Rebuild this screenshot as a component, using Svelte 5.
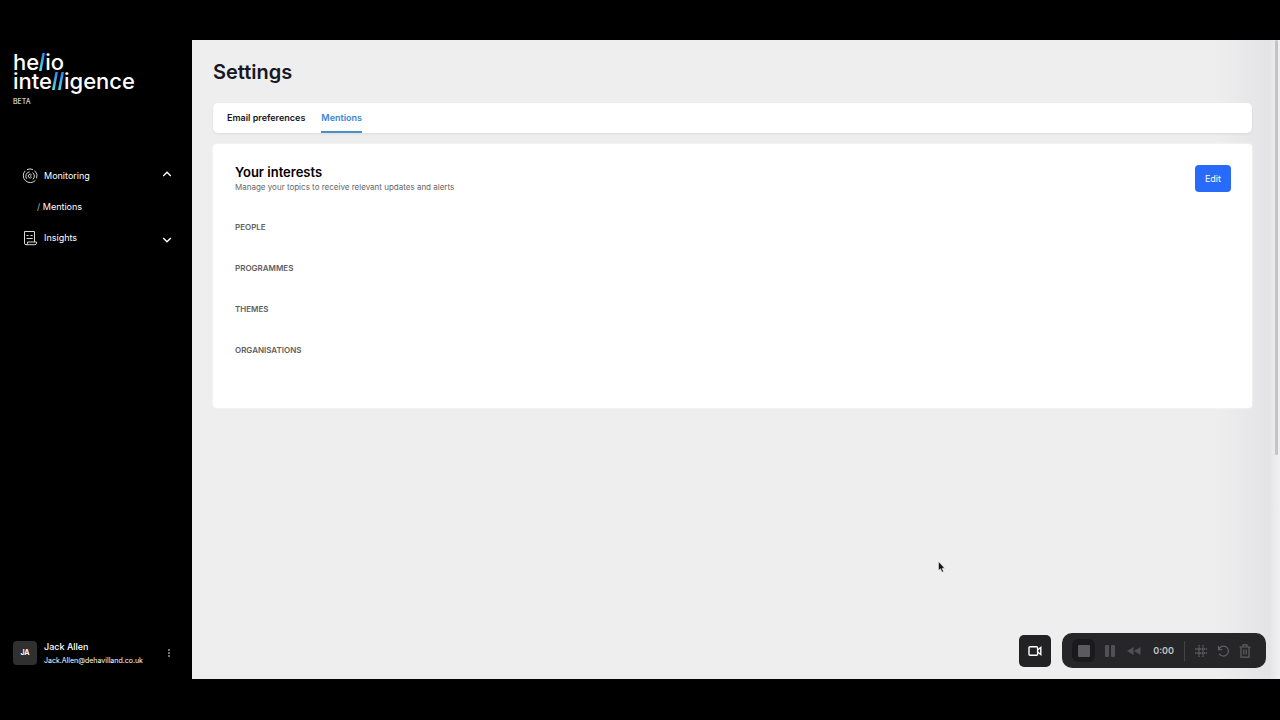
<script>
  let activeTab = $state('Mentions');

  const tabs = ['Email preferences', 'Mentions'];
  const interests = ['People', 'Programmes', 'Themes', 'Organisations'];
</script>

{#snippet slash()}
  <svg class="slash" viewBox="0 0 6 18" aria-hidden="true">
    <defs>
      <linearGradient id="slash-fill" x1="0" y1="0" x2="0" y2="1">
        <stop offset="0" stop-color="#2f80ea" />
        <stop offset="1" stop-color="#52e0f0" />
      </linearGradient>
    </defs>
    <path d="M3.4 0H6L2.6 18H0z" fill="url(#slash-fill)" />
  </svg>
{/snippet}

<div class="app">
  <aside class="sidebar">
    <a class="brand" href="#home" aria-label="helio intelligence">
      <span>he{@render slash()}io</span>
      <span>inte{@render slash()}{@render slash()}igence</span>
      <small>BETA</small>
    </a>

    <nav>
      <button class="nav-item">
        <svg viewBox="0 0 16 16" width="16" height="16" fill="none" stroke="#d8d8d8">
          <path d="M3.2 2.8A7 7 0 1 0 13.4 12.4M5 1.6A7 7 0 0 1 11 1.6M12.6 2.6A7 7 0 0 1 14.6 10.4" />
          <path d="M7.6 3.8a4.3 4.3 0 0 0-2.8 7M10.6 4.6a4.3 4.3 0 0 1 .2 6.8" />
          <path d="M9.6 6.8A1.9 1.9 0 1 0 9.6 9.3M8 8h1.4" />
        </svg>
        <span>Monitoring</span>
        <svg class="chevron" viewBox="0 0 10 10" width="10" height="10" fill="none" stroke="currentColor">
          <path d="M1.2 5L5 1.2 8.8 5" />
        </svg>
      </button>
      <a class="nav-sub" href="#mentions"><i>/</i> Mentions</a>
      <button class="nav-item">
        <svg viewBox="0 0 16 16" width="16" height="16" fill="none" stroke="#d8d8d8">
          <path d="M2.5 13V1.5h10V12M5.5 12h9v1.2a1.6 1.6 0 0 1-1.6 1.5H4A1.6 1.6 0 0 1 2.5 13M5.5 12v1.2A1.5 1.5 0 0 1 4 14.7" />
          <path d="M4.5 5.5h2M8.5 5.5h2.2M4.5 8.5h6.2" />
        </svg>
        <span>Insights</span>
        <svg class="chevron" viewBox="0 0 10 10" width="10" height="10" fill="none" stroke="currentColor">
          <path d="M1.2 5L5 8.8 8.8 5" />
        </svg>
      </button>
    </nav>

    <div class="user">
      <div class="avatar">JA</div>
      <div class="user-text">
        <strong>Jack Allen</strong>
        <span>Jack.Allen@dehavilland.co.uk</span>
      </div>
      <button class="more" aria-label="Account menu">
        <svg viewBox="0 0 2 8" width="2" height="8" fill="currentColor">
          <circle cx="1" cy="1" r=".8" /><circle cx="1" cy="4" r=".8" /><circle cx="1" cy="7" r=".8" />
        </svg>
      </button>
    </div>
  </aside>

  <main>
    <h1>Settings</h1>

    <div class="tabs" role="tablist">
      {#each tabs as tab}
        <button role="tab" aria-selected={activeTab === tab} class:active={activeTab === tab} onclick={() => (activeTab = tab)}>
          {tab}
        </button>
      {/each}
    </div>

    <section class="card">
      <header>
        <div>
          <h2>Your interests</h2>
          <p>Manage your topics to receive relevant updates and alerts</p>
        </div>
        <button class="edit">Edit</button>
      </header>
      {#each interests as interest}
        <h3>{interest}</h3>
      {/each}
    </section>

    <div class="scroll-thumb"></div>

    <svg class="cursor" viewBox="0 0 8 12" width="8" height="12">
      <path d="M.5.5v9l2-1.8 1.5 3.6 1.5-.7L4.1 7.2h2.6z" fill="#111" stroke="#fff" stroke-width=".5" />
    </svg>

    <div class="recorder">
      <button class="camera" aria-label="Camera">
        <svg viewBox="0 0 14 12" width="14" height="12" fill="none" stroke="#fff" stroke-width="1.4">
          <rect x="1" y="1.7" width="8.6" height="8.6" rx="1" />
          <path d="M9.6 5l3.2-2.6v7.2L9.6 7" />
        </svg>
      </button>
      <div class="controls">
        <button class="stop" aria-label="Stop">
          <svg viewBox="0 0 12 12" width="12" height="12"><rect width="12" height="12" rx="1" fill="#5b5b5f" /></svg>
        </button>
        <button aria-label="Pause">
          <svg viewBox="0 0 10 12" width="10" height="12" fill="#515155"><rect width="4" height="12" rx="1" /><rect x="6" width="4" height="12" rx="1" /></svg>
        </button>
        <button class="rewind" aria-label="Rewind">
          <svg viewBox="0 0 14 8" width="14" height="8" fill="#515155"><path d="M0 4L6.5 0v8zM7 4l6.5-4v8z" /></svg>
        </button>
        <time>0:00</time>
        <span class="divider"></span>
        <button aria-label="Grid">
          <svg viewBox="0 0 12 12" width="12" height="12" fill="none" stroke="#5f5f63" stroke-width="1.3" stroke-dasharray="1.6 .6">
            <path d="M4 0v12M8 0v12M0 4h12M0 8h12" />
          </svg>
        </button>
        <button aria-label="Restart">
          <svg viewBox="0 0 12 12" width="12" height="12" fill="none" stroke="#5f5f63" stroke-width="1.2">
            <path d="M1.5 1v3.6h3.6M1.7 4.4a5 5 0 1 1 .4 4.2" />
          </svg>
        </button>
        <button aria-label="Delete">
          <svg viewBox="0 0 12 14" width="12" height="14" fill="none" stroke="#5f5f63" stroke-width="1.2">
            <path d="M.5 3h11M4 3V.8h4V3M2 3v10.2h8V3M4.8 5.5v5M7.2 5.5v5" />
          </svg>
        </button>
      </div>
    </div>
  </main>
</div>

<style>
  :global(body) {
    background: #000;
  }

  .app {
    display: flex;
    box-sizing: border-box;
    min-height: 100vh;
    padding: 40px 0 41px;
    background: #000;
    color: #fff;
    font-family: Inter, "Liberation Sans", sans-serif;
  }

  button {
    border: 0;
    padding: 0;
    background: none;
    color: inherit;
    font: inherit;
    cursor: pointer;
  }

  svg {
    flex-shrink: 0;
  }

  h1,
  h2,
  h3,
  p {
    margin: 0;
  }

  .sidebar {
    display: flex;
    flex-direction: column;
    box-sizing: border-box;
    flex: 0 0 192px;
    padding: 13px 20px 12px 13px;
  }

  .brand {
    display: flex;
    flex-direction: column;
    color: #fff;
    text-decoration: none;
    font-size: 22px;
    font-weight: 500;
    line-height: 19px;
  }

  .brand small {
    margin-top: 6px;
    font-size: 7px;
    font-weight: 400;
    line-height: 10px;
  }

  .slash {
    width: 6px;
    height: 18px;
    vertical-align: -1px;
  }

  nav {
    display: flex;
    flex-direction: column;
    gap: 15px;
    margin-top: 61px;
    padding-left: 9px;
    font-size: 9px;
    line-height: 16px;
  }

  .nav-item {
    display: flex;
    align-items: center;
    gap: 6px;
    text-align: left;
  }

  .chevron {
    margin-left: auto;
    stroke-width: 1.4;
  }

  .nav-sub {
    padding-left: 15px;
    color: #fff;
    text-decoration: none;
  }

  .nav-sub i {
    color: #7cc8c4;
    font-style: normal;
  }

  .user {
    display: flex;
    align-items: center;
    gap: 7px;
    margin-top: auto;
  }

  .avatar {
    width: 24px;
    border-radius: 4px;
    background: #303030;
    font-size: 7px;
    font-weight: 700;
    line-height: 24px;
    text-align: center;
  }

  .user-text {
    display: flex;
    flex-direction: column;
    font-size: 7px;
    line-height: 12px;
  }

  .user-text strong {
    font-size: 9px;
    font-weight: 500;
    line-height: 16px;
  }

  .more {
    display: flex;
    margin-left: auto;
    padding-right: 2px;
  }

  main {
    position: relative;
    flex: 1;
    min-width: 0;
    padding: 20px 28px 0 21px;
    background: linear-gradient(90deg, #eeeeee 94%, #e4e4e7 99%, #f1f1f4);
    color: #000;
  }

  h1 {
    color: #171725;
    font-size: 20px;
    font-weight: 600;
    line-height: 24px;
  }

  .tabs {
    display: flex;
    gap: 16px;
    margin-top: 19px;
    padding: 0 14px;
    border-radius: 5px;
    background: #fff;
    box-shadow: 0 1px 3px rgba(0, 0, 0, 0.08);
  }

  .tabs button {
    border-bottom: 2px solid transparent;
    padding: 7px 0 5px;
    color: #171725;
    font-size: 9px;
    font-weight: 600;
    line-height: 16px;
  }

  .tabs button.active {
    border-color: #4b8fc7;
    color: #3887d6;
  }

  .card {
    margin-top: 11px;
    padding: 20px 21px 52px 22px;
    border-radius: 4px;
    background: #fff;
    box-shadow: 0 0 3px rgba(255, 255, 255, 0.8);
  }

  .card header {
    display: flex;
    justify-content: space-between;
    align-items: flex-start;
    margin-bottom: 28px;
  }

  h2 {
    font-size: 13px;
    font-weight: 600;
    line-height: 17px;
  }

  p {
    color: #666;
    font-size: 8px;
    line-height: 12px;
  }

  .edit {
    margin-top: 1px;
    padding: 0 10px;
    border-radius: 4px;
    background: #286afa;
    color: #fff;
    font-size: 9px;
    line-height: 27px;
  }

  h3 {
    color: #606060;
    font-size: 8px;
    font-weight: 600;
    line-height: 12px;
    text-transform: uppercase;
  }

  h3 + h3 {
    margin-top: 29px;
  }

  .scroll-thumb {
    position: absolute;
    top: 0;
    right: 2px;
    width: 3px;
    height: 65%;
    border-radius: 2px;
    background: #c4c4c7;
  }

  .cursor {
    position: absolute;
    top: 521px;
    left: 746px;
  }

  .recorder {
    position: absolute;
    right: 14px;
    bottom: 11px;
    display: flex;
    align-items: center;
    gap: 11px;
  }

  .recorder button {
    display: flex;
    align-items: center;
    justify-content: center;
  }

  .recorder .camera {
    width: 32px;
    height: 32px;
    border-radius: 5px;
    background: #222224;
  }

  .controls {
    display: flex;
    align-items: center;
    gap: 10px;
    height: 35px;
    padding: 0 15px 0 10px;
    border-radius: 10px;
    background: #262628;
  }

  .recorder .stop {
    width: 23px;
    height: 23px;
    border-radius: 6px;
    background: #1a1a1c;
  }

  .controls .rewind {
    margin-left: 2px;
  }

  time {
    margin-left: 2px;
    color: #c4c4c6;
    font-size: 9px;
    font-weight: 600;
  }

  .divider {
    width: 1px;
    height: 20px;
    background: #444447;
  }
</style>
